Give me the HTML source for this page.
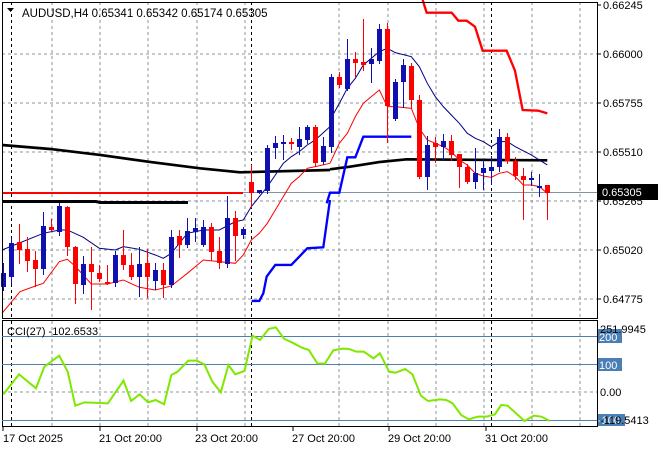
<!DOCTYPE html>
<html><head><meta charset="utf-8"><style>
html,body{margin:0;padding:0;background:#fff;width:660px;height:450px;overflow:hidden}
svg{display:block}
text{font-family:"Liberation Sans","DejaVu Sans",sans-serif;font-size:11px;fill:#000}
</style></head><body>
<svg width="660" height="450" viewBox="0 0 660 450" xmlns="http://www.w3.org/2000/svg">
<rect width="660" height="450" fill="#fff"/>
<g stroke="#8a949c" stroke-width="1" stroke-dasharray="3,3" fill="none">
<path d="M52 2V318M100 2V318M148 2V318M197 2V318M245 2V318M339 2V318M388 2V318M436 2V318M484 2V318M532 2V318M580 2V318"/>
<path d="M2 54H597M2 103H597M2 152H597M2 201H597M2 250H597M2 299H597"/>
<path d="M52 321V426M100 321V426M148 321V426M197 321V426M245 321V426M339 321V426M388 321V426M436 321V426M484 321V426M532 321V426M580 321V426"/>
<path d="M2 392H597"/>
</g>
<g stroke="#000" stroke-width="1" stroke-dasharray="3,3">
<path d="M11.5 2V318M251.5 2V318M491.5 2V318M11.5 321V426M251.5 321V426M491.5 321V426"/>
</g>
<path d="M2 192.5H597" stroke="#8094a4" stroke-width="1"/>
<path d="M2 193H243" stroke="#ff0000" stroke-width="2"/>
<path d="M2 201.5H96L100 202.5H188" stroke="#000" stroke-width="3" fill="none"/>
<g fill="none">
<g transform="scale(0.3333)">
<polyline stroke="#000" stroke-width="8" points="6,435 150,447 300,465 450,486 600,505 720,517 990,510"/>
<polyline stroke="#000080" stroke-width="3" points="6,750 130,700 178,690 202,690 250,712 298,745 346,750 370,740 418,748 466,765 490,775 514,760 562,700 610,690 658,690 706,665 730,660 754,620 778,590 802,560 826,525 850,490 874,470 898,455 922,435 946,420 990,380"/>
<polyline stroke="#ff0000" stroke-width="3" points="6,940 60,875 106,858 130,850 178,785 202,778 227,800 274,852 322,852 370,840 418,862 466,870 514,858 562,820 610,780 658,785 706,790 730,765 754,720 778,700 802,670 826,630 850,590 874,550 898,530 922,505 946,500 990,490"/>
<polyline stroke="#0000ff" stroke-width="7" points="755,903 778,903 790,880 800,830 826,795 874,795 922,745 970,742 990,600"/>
</g>
<g transform="translate(330,0) scale(0.3333)">
<polyline stroke="#000" stroke-width="8" points="0,508 60,500 150,486 230,478 652,481"/>
<polyline stroke="#000080" stroke-width="3" points="0,360 28,310 52,265 76,235 100,195 148,155 172,145 196,158 244,170 268,200 292,250 316,290 340,320 364,345 388,370 412,400 436,415 460,425 484,440 508,425 532,425 556,440 604,465 652,495"/>
<polyline stroke="#ff0000" stroke-width="3" points="0,490 28,430 52,400 76,350 100,310 124,290 148,270 172,320 196,320 244,325 268,385 292,420 316,430 340,440 364,455 388,480 412,495 436,520 460,528 484,532 508,520 532,515 556,530 580,555 604,555 628,560 652,580"/>
<polyline stroke="#0000ff" stroke-width="7" points="-10,610 0,578 28,578 52,472 76,472 100,410 244,410"/>
<polyline stroke="#ff0000" stroke-width="7" points="278,0 290,38 365,38 385,62 410,62 435,80 458,152 530,152 555,212 578,330 625,332 652,340"/>
</g>
</g>
<g id="c"></g>
<rect x="2.5" y="2.5" width="595" height="316" fill="none" stroke="#000"/>
<rect x="2.5" y="320.5" width="595" height="106" fill="none" stroke="#000"/>
<g stroke="#4f7fae" stroke-width="1"><path d="M2 336.5H597M2 364.5H597M2 420.5H597"/></g>
<polyline fill="none" stroke="#7fe800" stroke-width="2" transform="translate(0,315) scale(0.423,0.3333)" vector-effect="non-scaling-stroke" points="8,238 45,178 85,220 105,155 140,122 160,170 178,272 200,262 255,265 292,197 310,258 330,238 350,262 368,255 388,268 405,180 420,170 445,137 465,137 483,148 502,200 522,232 540,150 556,178 578,168 597,62 615,75 635,42 652,37 672,72 690,82 712,97 730,105 750,145 768,146 788,106 810,101 825,102 842,110 860,110 883,130 898,115 920,170 935,173 958,162 975,178 995,242 1012,258 1040,253 1055,255 1070,265 1090,300 1108,313 1130,305 1150,305 1170,298 1185,270 1200,272 1240,318 1262,302 1280,305 1300,318"/>
<text x="7" y="335">CCI(27) -102.6533</text>
<path d="M7 8h7l-3.5 4z" fill="#000"/>
<text x="22" y="17" style="font-size:11.5px">AUDUSD,H4  0.65341  0.65342  0.65174  0.65305</text>
<g>
<path d="M597 5h4M597 54h4M597 103h4M597 152h4M597 201h4M597 250h4M597 299h4" stroke="#000"/>
<text x="603" y="9">0.66245</text>
<text x="603" y="58">0.66000</text>
<text x="603" y="107">0.65755</text>
<text x="603" y="156">0.65510</text>
<text x="603" y="205">0.65265</text>
<text x="603" y="254">0.65020</text>
<text x="603" y="303">0.64775</text>
<rect x="598" y="184" width="60" height="16" fill="#000"/>
<text x="602" y="196" style="fill:#fff">0.65305</text>
</g>
<rect x="598" y="329" width="24" height="14" fill="#4a7fb5"/>
<text x="599" y="341" style="fill:#fff">200</text>
<text x="600" y="333">251.9945</text>
<rect x="598" y="358" width="24" height="13" fill="#4a7fb5"/>
<text x="599" y="369" style="fill:#fff">100</text>
<text x="600" y="396">0.00</text>
<rect x="598" y="414" width="27" height="12" fill="#4a7fb5"/>
<text x="598" y="424" style="fill:#fff">-100</text>
<text x="600" y="424">-119.5413</text>
<g stroke="#000"><path d="M3 427v4M100 427v4M197 427v4M293 427v4M389 427v4M486 427v4"/></g>
<text x="3" y="442">17 Oct 2025</text>
<text x="99" y="442">21 Oct 20:00</text>
<text x="195" y="442">23 Oct 20:00</text>
<text x="292" y="442">27 Oct 20:00</text>
<text x="388" y="442">29 Oct 20:00</text>
<text x="485" y="442">31 Oct 20:00</text>
</svg>
<script>
var d=[["b",273,287,263,290],["b",243,277,238,283],["r",242,250,224,263],["r",249,261,237,271],["r",260,269,251,286],["b",226,269,212,274],["r",227,230,219,230],["b",206,232,203,235],["r",207,247,206,255],["r",247,284,246,303],["b",264,285,256,293],["r",264,272,247,309],["r",273,279,265,281],["r",282,284,265,284],["b",255,283,251,286],["r",255,265,230,269],["r",265,277,253,279],["b",264,277,247,296],["r",263,277,249,297],["b",270,281,263,289],["r",270,285,263,297],["b",237,285,230,287],["r",236,245,230,257],["b",231,245,218,247],["b",228,232,218,241],["b",227,245,220,246],["r",227,252,223,260],["r",251,263,237,268],["b",218,264,196,267],["r",218,236,211,260],["b",229,235,227,238],["r",182,193,165,207],["b",190,193,190,193],["b",148,191,145,193],["b",143,148,136,158],["b",142,143,135,159],["r",142,143,138,149],["b",139,147,127,154],["b",127,140,125,143],["r",127,163,125,166],["b",146,162,137,164],["b",77,147,74,152],["r",77,85,72,87],["b",59,89,39,90],["r",59,63,52,77],["r",62,65,19,70],["b",59,64,48,82],["b",29,61,24,63],["r",29,106,23,142],["b",82,119,79,120],["b",65,82,59,107],["r",66,100,63,107],["r",100,177,95,178],["b",145,177,136,189],["r",143,147,137,162],["b",141,147,134,159],["r",141,155,135,160],["r",154,167,154,187],["r",167,182,164,183],["b",173,182,148,188],["b",168,173,159,189],["b",167,171,156,184],["b",137,167,129,171],["r",137,161,133,163],["r",161,176,157,179],["r",176,180,168,219],["b",178,179,172,185],["b",186,187,174,196],["r",185,193,185,219]];
var s="";
for(var i=0;i<d.length;i++){var c=d[i],x=3.5+8*i,col=c[0]=="r"?"#ff0000":"#1010b0";
s+='<path d="M'+x+' '+c[3]+'V'+(c[4]+1)+'" stroke="'+col+'" stroke-width="1"/>';
s+='<rect x="'+(x-2.5)+'" y="'+c[1]+'" width="5" height="'+Math.max(2,c[2]-c[1])+'" fill="'+col+'"/>';}
document.getElementById("c").innerHTML=s;
</script>
</body></html>
